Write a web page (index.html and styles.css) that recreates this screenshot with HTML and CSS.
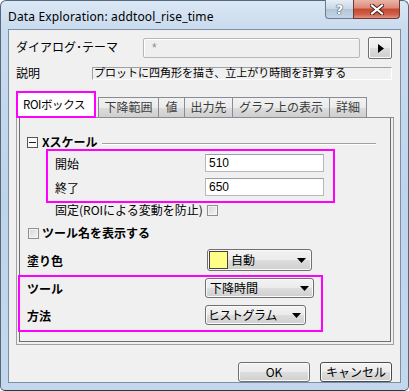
FILE: index.html
```html
<!DOCTYPE html>
<html lang="ja">
<head>
<meta charset="utf-8">
<link rel="stylesheet" href="styles.css">
</head>
<body>
<div class="window">
  <div class="titlebar">
    <span class="title">Data Exploration: addtool_rise_time</span>
    <div class="caption-btns">
      <div class="cbtn help">?</div>
      <div class="cbtn close">
        <svg width="14" height="11" viewBox="0 0 14 11"><path d="M2 1.5 L12 9.5 M12 1.5 L2 9.5" stroke="#3a1e1a" stroke-width="4" stroke-linecap="square"/><path d="M2 1.5 L12 9.5 M12 1.5 L2 9.5" stroke="#ffffff" stroke-width="2.2" stroke-linecap="square"/></svg>
      </div>
    </div>
  </div>
  <div class="client">
    <div class="row theme-row">
      <span class="lbl w-theme">ダイアログ･テーマ</span>
      <div class="theme-box">*</div>
      <div class="arrow-btn"><svg width="6" height="9" viewBox="0 0 6 9"><path d="M0 0 L6 4.5 L0 9 Z" fill="#000"/></svg></div>
    </div>
    <div class="row desc-row">
      <span class="lbl w-desc">説明</span>
      <div class="desc-box"><span class="desc-text">プロットに四角形を描き、立上がり時間を計算する</span></div>
    </div>
    <div class="tabs">
      <div class="tab active">ROIボックス</div>
      <div class="tab t1">下降範囲</div>
      <div class="tab t2">値</div>
      <div class="tab t3">出力先</div>
      <div class="tab t4">グラフ上の表示</div>
      <div class="tab t5">詳細</div>
    </div>
    <div class="panel">
      <div class="panel-inner">
        <div class="group-head">
          <span class="minus-box"><span class="minus"></span></span>
          <span class="bold">Xスケール</span>
          <span class="group-line"></span>
        </div>
        <div class="hl hl1">
          <div class="frow">
            <span class="lbl w-range">開始</span>
            <div class="input">510</div>
          </div>
          <div class="frow">
            <span class="lbl w-range">終了</span>
            <div class="input">650</div>
          </div>
        </div>
        <div class="fix-row">
          <span class="lbl w-fix">固定(ROIによる変動を防止)</span>
          <span class="check"></span>
        </div>
        <div class="name-row">
          <span class="check"></span>
          <span class="bold name-lbl">ツール名を表示する</span>
        </div>
        <div class="color-row">
          <span class="bold w-color">塗り色</span>
          <div class="dropdown color-dd">
            <span class="swatch"></span>
            <span class="dd-text">自動</span>
            <svg class="dd-arrow" width="9" height="5" viewBox="0 0 9 5"><path d="M0 0 L9 0 L4.5 5 Z" fill="#000"/></svg>
          </div>
        </div>
        <div class="hl hl2">
          <div class="trow">
            <span class="bold w-tool">ツール</span>
            <div class="dropdown tool-dd">
              <span class="dd-text">下降時間</span>
              <svg class="dd-arrow" width="9" height="5" viewBox="0 0 9 5"><path d="M0 0 L9 0 L4.5 5 Z" fill="#000"/></svg>
            </div>
          </div>
          <div class="trow">
            <span class="bold w-tool">方法</span>
            <div class="dropdown method-dd">
              <span class="dd-text">ヒストグラム</span>
              <svg class="dd-arrow" width="9" height="5" viewBox="0 0 9 5"><path d="M0 0 L9 0 L4.5 5 Z" fill="#000"/></svg>
            </div>
          </div>
        </div>
      </div>
    </div>
    <div class="buttons">
      <div class="btn">OK</div>
      <div class="btn cancel">キャンセル</div>
    </div>
  </div>
</div>
</body>
</html>
```
FILE: styles.css
```css
* { box-sizing: border-box; }
html, body { margin: 0; padding: 0; background: #ffffff; }
body {
  width: 409px;
  height: 391px;
  overflow: hidden;
  font-family: "Noto Sans CJK JP", "Noto Sans", sans-serif;
  font-size: 12px;
  color: #000;
}
.window {
  width: 409px;
  height: 391px;
  border: 1px solid #55687e;
  border-bottom-color: #2c3540;
  border-radius: 6px 6px 5px 5px;
  background: linear-gradient(#dbe7f4 0px, #c9dbee 28px, #bed4eb 200px, #c4d8ed 391px);
  padding: 0 7px;
  display: flex;
  flex-direction: column;
}
.titlebar {
  height: 28px;
  display: flex;
  align-items: center;
  flex: none;
}
.title {
  font-family: "Noto Sans", "Liberation Sans", sans-serif;
  font-size: 12px;
  color: #000;
  padding-top: 2px;
  letter-spacing: 0.15px;
}
.caption-btns {
  margin-left: auto;
  margin-right: 1px;
  align-self: flex-start;
  margin-top: -1px;
  display: flex;
}
.cbtn {
  height: 19px;
  display: flex;
  align-items: center;
  justify-content: center;
}
.help {
  width: 28px;
  border: 1px solid #6b7d92;
  border-top: none;
  border-right: none;
  border-radius: 0 0 0 4px;
  background: linear-gradient(#e6eef6, #c8d6e4 50%, #b2c5d8 51%, #c5d5e4);
  font-family: "DejaVu Sans", sans-serif;
  font-weight: bold;
  font-size: 13px;
  color: #ffffff;
  text-shadow: 0 0 1px #3d4c5e, 0 0 1px #3d4c5e, 0 0 1px #3d4c5e;
}
.close {
  width: 47px;
  border: 1px solid #6b3a32;
  border-top: none;
  border-radius: 0 0 4px 0;
  background: linear-gradient(#eab5a9, #d98a78 45%, #c8452d 50%, #d0604a 80%, #e39480);
}
.client {
  height: 354px;
  flex: none;
  background: #f0f0f0;
  border: 1px solid #7c8fa5;
  padding: 7px 8px 0 7px;
  display: flex;
  flex-direction: column;
}
.row { display: flex; flex: none; }
.lbl { display: inline-block; flex: none; white-space: nowrap; }
.bold { font-weight: bold; white-space: nowrap; }

.theme-row { height: 22px; align-items: flex-start; }
.theme-row .lbl { line-height: 14px; padding-top: 3px; }
.w-theme { width: 127px; }
.theme-box {
  width: 217px;
  height: 20px;
  margin-top: 1px;
  border: 1px solid #b7b7b7;
  border-radius: 2px;
  background: #efefef;
  box-shadow: inset 1px 1px 0 #ffffff;
  color: #8c8c8c;
  font-family: "Liberation Sans", sans-serif;
  font-size: 12px;
  line-height: 18px;
  padding-left: 8px;
}
.arrow-btn {
  width: 24px;
  height: 22px;
  margin-left: 8px;
  border: 1px solid #707070;
  border-radius: 2px;
  background: linear-gradient(#f4f4f4, #ebebeb 50%, #dddddd 51%, #cfcfcf);
  box-shadow: inset 0 0 0 1px #fbfbfb;
  display: flex;
  align-items: center;
  justify-content: center;
  padding-left: 2px;
}

.desc-row { margin-top: 7px; height: 14px; }
.desc-row .lbl { line-height: 14px; }
.w-desc { width: 76px; }
.desc-box {
  width: 301px;
  height: 13px;
  margin-top: 1px;
  border: 1px solid #a0a0a0;
  border-right-color: #ffffff;
  border-bottom-color: #ffffff;
  background: #f0f0f0;
  position: relative;
}
.desc-text {
  display: block;
  font-size: 11px;
  line-height: 13px;
  margin-top: -2px;
  white-space: nowrap;
  padding-left: 1px;
}

.tabs {
  margin-top: 11px;
  height: 27px;
  display: flex;
  align-items: flex-end;
  position: relative;
  z-index: 1;
  flex: none;
}
.tab {
  height: 21px;
  border: 1px solid #898c95;
  margin-left: -1px;
  background: linear-gradient(#f2f2f2, #ebebeb 50%, #dddddd 51%, #cfcfcf);
  color: #3c3c3c;
  text-align: center;
  line-height: 18px;
  white-space: nowrap;
}
.tab.active {
  width: 80px;
  height: 27px;
  margin-left: 0;
  margin-right: 3px;
  border: 2px solid #ff00ff;
  background: #ffffff;
  color: #000;
  text-align: left;
  padding-left: 5px;
  line-height: 23px;
  font-size: 11.5px;
  letter-spacing: -0.4px;
}
.t1 { width: 61px; }
.t2 { width: 27px; }
.t3 { width: 49px; }
.t4 { width: 98px; }
.t5 { width: 38px; }

.panel {
  margin-top: -1px;
  width: 378px;
  height: 228px;
  flex: none;
  border: 1px solid #a0a0a0;
  border-top-color: #898c95;
  padding: 0 2px 2px 2px;
}
.panel-inner {
  height: 100%;
  border: 1px solid #6d6d6d;
  border-top: none;
  display: flex;
  flex-direction: column;
}

.group-head {
  margin-top: 17px;
  height: 14px;
  padding-left: 7px;
  display: flex;
  align-items: flex-start;
  flex: none;
}
.minus-box {
  width: 11px;
  height: 11px;
  margin-top: 2px;
  border: 1px solid #555555;
  background: #fafafa;
  display: flex;
  align-items: center;
  justify-content: center;
  flex: none;
}
.minus { width: 7px; height: 1px; background: #222; }
.group-head .bold { margin-left: 4px; line-height: 14px; }
.group-line {
  flex: 1;
  margin: 8px 14px 0 4px;
  border-top: 1px solid #a0a0a0;
  border-bottom: 1px solid #ffffff;
  height: 2px;
}

.hl { border: 2px solid #ff00ff; flex: none; }
.hl1 {
  margin-left: 26px;
  width: 289px;
  padding: 3px 0 5px 7px;
  display: flex;
  flex-direction: column;
  gap: 6px;
}
.frow { display: flex; height: 18px; align-items: center; }
.w-range { width: 150px; }
.input {
  width: 119px;
  height: 18px;
  border: 1px solid #b5b8bf;
  border-top-color: #9a9ea8;
  background: #ffffff;
  font-family: "Liberation Sans", sans-serif;
  font-size: 12px;
  line-height: 16px;
  padding-left: 3px;
}

.fix-row {
  margin-top: 1px;
  height: 12px;
  display: flex;
  align-items: center;
  padding-left: 35px;
  flex: none;
}
.w-fix { width: 152px; line-height: 12px; }
.check {
  width: 11px;
  height: 11px;
  border: 1px solid #8e8f8f;
  background: linear-gradient(135deg, #d5d5d5, #f6f6f6);
  box-shadow: inset 0 0 0 1px #f4f4f4;
  flex: none;
}
.name-row {
  margin-top: 11px;
  height: 12px;
  display: flex;
  align-items: center;
  padding-left: 8px;
  flex: none;
}
.name-lbl { margin-left: 3px; line-height: 12px; }

.color-row {
  margin-top: 10px;
  height: 22px;
  display: flex;
  align-items: center;
  padding-left: 7px;
  flex: none;
}
.w-color { width: 180px; }
.dropdown {
  border: 1px solid #707070;
  border-radius: 3px;
  background: linear-gradient(#f3f3f3, #ebebeb 50%, #dddddd 51%, #cfcfcf);
  box-shadow: inset 0 0 0 1px #fafafa;
  display: flex;
  align-items: center;
  position: relative;
}
.color-dd { width: 105px; height: 22px; padding-left: 1px; }
.swatch {
  width: 19px;
  height: 18px;
  background: #ffff88;
  border: 1px solid #444444;
  flex: none;
}
.dd-text { padding-left: 3px; white-space: nowrap; line-height: 16px; }
.dd-arrow { margin-left: auto; flex: none; }
.color-dd .dd-arrow { margin-right: 5px; }
.tool-dd .dd-arrow, .method-dd .dd-arrow { margin-right: 4px; }

.hl2 {
  margin-left: -2px;
  margin-top: 4px;
  width: 305px;
  padding: 1px 0 5px 7px;
  display: flex;
  flex-direction: column;
  gap: 7px;
}
.trow { display: flex; align-items: center; height: 20px; }
.w-tool { width: 178px; }
.tool-dd { width: 109px; height: 20px; padding-left: 1px; }
.method-dd { width: 101px; height: 20px; padding-left: 0; }
.method-dd .dd-text { padding-left: 2px; letter-spacing: -0.5px; }

.buttons {
  margin-top: 17px;
  display: flex;
  justify-content: flex-end;
  gap: 10px;
  flex: none;
}
.btn {
  width: 72px;
  height: 20px;
  border: 1px solid #707070;
  border-radius: 3px;
  background: linear-gradient(#f3f3f3, #ebebeb 50%, #dddddd 51%, #cfcfcf);
  box-shadow: inset 0 0 0 1px #fbfbfb;
  text-align: center;
  line-height: 17px;
  font-family: "Noto Sans CJK JP", sans-serif;
}
.btn.cancel { border-color: #4a4a4a; }
```
